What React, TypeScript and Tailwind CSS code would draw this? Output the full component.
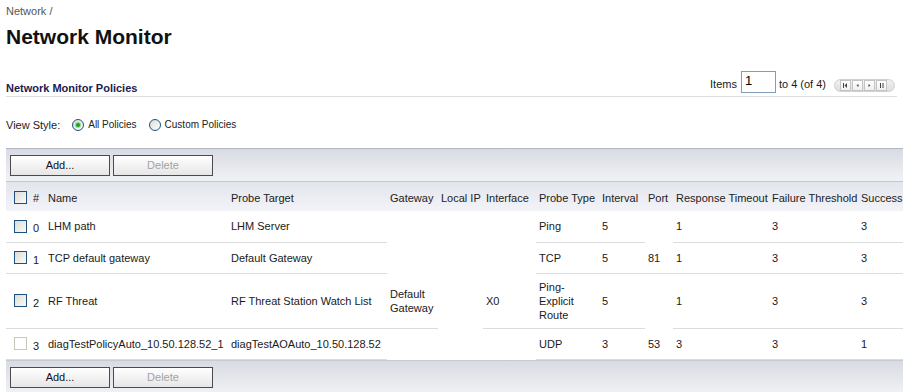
import React from "react";

type Row = {
  n: number;
  name: string;
  target: string;
  gateway: string[];
  localIp: string;
  iface: string;
  type: string[];
  interval: string;
  port: string;
  timeout: string;
  failure: string;
  success: string;
  disabled?: boolean;
};

const rows: Row[] = [
  { n: 0, name: "LHM path", target: "LHM Server", gateway: [], localIp: "", iface: "", type: ["Ping"], interval: "5", port: "", timeout: "1", failure: "3", success: "3" },
  { n: 1, name: "TCP default gateway", target: "Default Gateway", gateway: [], localIp: "", iface: "", type: ["TCP"], interval: "5", port: "81", timeout: "1", failure: "3", success: "3" },
  { n: 2, name: "RF Threat", target: "RF Threat Station Watch List", gateway: ["Default", "Gateway"], localIp: "", iface: "X0", type: ["Ping-", "Explicit", "Route"], interval: "5", port: "", timeout: "1", failure: "3", success: "3" },
  { n: 3, name: "diagTestPolicyAuto_10.50.128.52_1", target: "diagTestAOAuto_10.50.128.52", gateway: [], localIp: "", iface: "", type: ["UDP"], interval: "3", port: "53", timeout: "3", failure: "3", success: "1", disabled: true },
];

const headers = [
  { label: "#", w: "w-[15px]" },
  { label: "Name", w: "w-[183px]" },
  { label: "Probe Target", w: "w-[159px]" },
  { label: "Gateway", w: "w-[51px]" },
  { label: "Local IP", w: "w-[45px]" },
  { label: "Interface", w: "w-[53px]" },
  { label: "Probe Type", w: "w-[63px]" },
  { label: "Interval", w: "w-[46px]" },
  { label: "Port", w: "w-[28px]" },
  { label: "Response Timeout", w: "w-[96px]" },
  { label: "Failure Threshold", w: "w-[89px]" },
  { label: "Success", w: "w-[50px]" },
];

function Checkbox({ disabled }: { disabled?: boolean }) {
  return (
    <span
      className={
        disabled
          ? "block h-[13px] w-[13px] border border-[#c9c7ba] bg-white"
          : "block h-[13px] w-[13px] border border-[#1c5180] bg-gradient-to-br from-[#dcdcd7] to-[#fbfbf9]"
      }
    />
  );
}

function Radio({ checked }: { checked?: boolean }) {
  return (
    <span className="flex h-[12px] w-[12px] items-center justify-center rounded-full border border-[#1c5180] bg-gradient-to-br from-[#dcdcd7] to-white">
      {checked && <span className="h-[4px] w-[4px] rounded-full bg-[#21a121] shadow-[0_0_1px_1px_#8fd88f]" />}
    </span>
  );
}

function Toolbar({ top }: { top?: boolean }) {
  return (
    <div
      className={
        "flex items-center gap-[3px] bg-gradient-to-b from-[#d8dbe3] to-[#f1f2f5] pl-[4px] " +
        (top ? "h-[34px] border-t border-b border-t-[#b4b8c4] border-b-[#c4c7d0]" : "h-[34px] border-t border-[#c8cad2]")
      }
    >
      <button className="h-[21px] w-[100px] border border-[#4b4b4b] bg-gradient-to-b from-white to-[#e6e6e6] text-[11px] text-[#111]">
        Add...
      </button>
      <button className="h-[21px] w-[100px] border border-[#4b4b4b] bg-gradient-to-b from-white to-[#e6e6e6] text-[11px] text-[#a3a3a3]">
        Delete
      </button>
    </div>
  );
}

function PagerButton({ kind }: { kind: "first" | "prev" | "next" | "last" }) {
  return (
    <span className="flex h-[11px] w-[11px] items-center justify-center border border-[#c4c4c4] bg-gradient-to-b from-white to-[#f0f0f0]">
      <svg width="7" height="5" viewBox="0 0 7 5">
        {kind === "first" && (
          <>
            <rect x="1" y="0" width="1" height="5" fill="#444" />
            <path d="M5 0 L2.5 2.5 L5 5 Z" fill="#444" />
          </>
        )}
        {kind === "prev" && <path d="M4.5 1 L2.5 2.5 L4.5 4 Z" fill="#444" />}
        {kind === "next" && <path d="M2.5 1 L4.5 2.5 L2.5 4 Z" fill="#444" />}
        {kind === "last" && (
          <>
            <rect x="2" y="0" width="1" height="5" fill="#444" />
            <rect x="4.5" y="0" width="1" height="5" fill="#444" />
          </>
        )}
      </svg>
    </span>
  );
}

function Cell({ children, filled, className = "" }: { children?: React.ReactNode; filled: boolean; className?: string }) {
  return (
    <td
      className={
        "h-[31px] py-[6px] pl-[3px] align-middle leading-[14px] " +
        (filled ? "border-b border-[#dcdcdc] " : "border-b border-transparent ") +
        className
      }
    >
      {children}
    </td>
  );
}

export default function App() {
  return (
    <div className="h-[392px] w-[903px] overflow-hidden bg-white font-['Liberation_Sans',Arial,sans-serif] text-[11px] text-[#1a1a1a]">
      <div className="pl-[6px]">
        <p className="pt-[5px] leading-[13px] text-[#555]">Network /</p>
        <h1 className="mt-[7px] text-[21px] font-bold leading-[24px] text-[#111]">Network Monitor</h1>

        <div className="mt-[22px] flex items-end justify-between pr-[8px]">
          <h2 className="-mb-[2px] font-bold leading-[13px] text-[#1c2050]">Network Monitor Policies</h2>
          <div className="flex items-end">
            <span className="mb-[1px] mr-[4px]">Items</span>
            <input
              defaultValue="1"
              className="h-[22px] w-[35px] border border-[#7f9db9] px-[3px] pb-[4px] text-[13px] leading-[13px] text-black outline-none"
            />
            <span className="mb-[1px] ml-[3px]">to 4 (of 4)</span>
            <div className="mb-[1px] ml-[8px] flex h-[13px] w-[61px] items-center gap-[1px] rounded-[7px] border border-[#cfcfcf] bg-gradient-to-b from-[#f2f2f2] to-[#dedede] pl-[5px]">
              <PagerButton kind="first" />
              <PagerButton kind="prev" />
              <PagerButton kind="next" />
              <PagerButton kind="last" />
            </div>
          </div>
        </div>
        <div className="mr-[6px] mt-[3px] h-px bg-[#dedede]" />

        <div className="mt-[21px] flex items-center leading-[14px] text-[#222]">
          <span>View Style:</span>
          <span className="ml-[12px] flex items-center gap-[4px]">
            <Radio checked />
            <span className="text-[10px]">All Policies</span>
          </span>
          <span className="ml-[12px] flex items-center gap-[4px]">
            <Radio />
            <span className="text-[10px]">Custom Policies</span>
          </span>
        </div>

        <div className="mt-[16px]">
          <Toolbar top />
          <table className="w-[902px] table-fixed border-collapse">
            <thead>
              <tr className="h-[29px] bg-gradient-to-b from-[#e2e5ed] to-[#f3f4f8]">
                <th className="w-[24px] pl-[8px] pt-[2px] align-middle">
                  <Checkbox />
                </th>
                {headers.map((h) => (
                  <th key={h.label} className={h.w + " whitespace-nowrap pl-[3px] pt-[3px] text-left align-middle font-normal text-[#222]"}>
                    {h.label}
                  </th>
                ))}
              </tr>
            </thead>
            <tbody>
              {rows.map((r) => (
                <tr key={r.n}>
                  <Cell filled className="pl-[8px]">
                    <Checkbox disabled={r.disabled} />
                  </Cell>
                  <Cell filled>
                    <span className="relative top-[2px]">{r.n}</span>
                  </Cell>
                  <Cell filled className="whitespace-nowrap">{r.name}</Cell>
                  <Cell filled className="whitespace-nowrap">{r.target}</Cell>
                  <Cell filled={r.gateway.length > 0}>
                    {r.gateway.map((l) => (
                      <div key={l}>{l}</div>
                    ))}
                  </Cell>
                  <Cell filled={r.localIp !== ""}>{r.localIp}</Cell>
                  <Cell filled={r.iface !== ""}>{r.iface}</Cell>
                  <Cell filled>
                    {r.type.map((l) => (
                      <div key={l}>{l}</div>
                    ))}
                  </Cell>
                  <Cell filled>{r.interval}</Cell>
                  <Cell filled={r.port !== ""}>{r.port}</Cell>
                  <Cell filled>{r.timeout}</Cell>
                  <Cell filled>{r.failure}</Cell>
                  <Cell filled>{r.success}</Cell>
                </tr>
              ))}
            </tbody>
          </table>
          <Toolbar />
        </div>
      </div>
    </div>
  );
}
